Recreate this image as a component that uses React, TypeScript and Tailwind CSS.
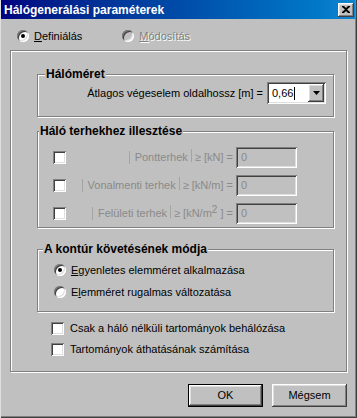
import type { ReactNode } from 'react';

const sunken =
  'shadow-[inset_1px_1px_0_#808080,inset_-1px_-1px_0_#ffffff,inset_2px_2px_0_#404040,inset_-2px_-2px_0_#dfdfdf]';
const raised =
  'shadow-[inset_-1px_-1px_0_#404040,inset_1px_1px_0_#ffffff,inset_-2px_-2px_0_#808080,inset_2px_2px_0_#dfdfdf]';
const etched = 'border border-[#808080] shadow-[inset_1px_1px_0_#ffffff,1px_1px_0_#ffffff]';

function Radio({ checked = false, disabled = false }: { checked?: boolean; disabled?: boolean }) {
  return (
    <span
      className={`relative inline-block w-[12px] h-[12px] shrink-0 rounded-full ${
        disabled ? 'bg-[#c0c0c0]' : 'bg-white'
      } ${sunken}`}
    >
      {checked && <span className="absolute left-[4px] top-[4px] w-[4px] h-[4px] rounded-full bg-black" />}
    </span>
  );
}

function Checkbox() {
  return <span className={`inline-block w-[13px] h-[13px] shrink-0 bg-white ${sunken}`} />;
}

function GroupBox({
  title,
  titleLeft,
  className,
  children,
}: {
  title: string;
  titleLeft: string;
  className: string;
  children: ReactNode;
}) {
  return (
    <div className={`relative ${etched} ${className}`}>
      <span
        className={`absolute -top-[8px] ${titleLeft} bg-[#c0c0c0] px-[1px] text-[12px] font-bold leading-[14px] text-black`}
      >
        {title}
      </span>
      {children}
    </div>
  );
}

function Sep() {
  return <span className="inline-block h-[13px] border-l border-[#a4a4a4]" />;
}

const loads = [
  { name: 'Pontterhek', unit: <>≥ [kN] =</> },
  { name: 'Vonalmenti terhek', unit: <>≥ [kN/m] =</> },
  {
    name: 'Felületi terhek',
    unit: (
      <>
        ≥ [kN/m<span className="relative -top-[4px] text-[10px]">2</span> ] =
      </>
    ),
  },
];

export default function App() {
  return (
    <div className="w-[357px] h-[418px] bg-[#c0c0c0] text-[11px] text-black [font-family:'Liberation_Sans',Arial,sans-serif] flex flex-col shadow-[inset_1px_0_0_#dfdfdf,inset_-1px_-1px_0_#404040,inset_-2px_-2px_0_#808080]">
      {/* Title bar */}
      <div className="ml-[1px] mr-[2px] h-[19px] flex items-center justify-between pl-[3px] pr-[1px] bg-gradient-to-r from-[#000080] to-[#1084d0]">
        <span className="text-white text-[12px] font-bold leading-none">Hálógenerálási paraméterek</span>
        <span className={`w-[16px] h-[14px] bg-[#c0c0c0] flex items-center justify-center ${raised}`}>
          <svg width="8" height="7" viewBox="0 0 8 7">
            <path d="M0 0h2l2 2 2-2h2v1L5 3.5 8 6v1H6L4 5 2 7H0V6l3-2.5L0 1z" fill="#000" />
          </svg>
        </span>
      </div>

      {/* Mode radios */}
      <div className="mt-[11px] h-[12px] flex items-center">
        <div className="ml-[17px] flex items-center gap-[5px]">
          <Radio checked />
          <span className="leading-none">
            <span className="underline">D</span>efiniálás
          </span>
        </div>
        <div className="ml-[40px] flex items-center gap-[5px]">
          <Radio disabled />
          <span className="leading-none text-[#808080] [text-shadow:1px_1px_0_#ffffff]">
            <span className="underline">M</span>ódosítás
          </span>
        </div>
      </div>

      {/* Main frame */}
      <div className={`mt-[8px] ml-[10px] w-[337px] h-[322px] flex flex-col ${etched}`}>
        <GroupBox title="Hálóméret" titleLeft="left-[7px]" className="mt-[23px] ml-[26px] w-[297px] h-[43px]">
          <div className="pt-[7px] pr-[7px] flex items-center justify-end">
            <span className="mr-[4px]">Átlagos végeselem oldalhossz [m] =</span>
            <div className={`w-[59px] h-[22px] bg-white flex items-center justify-between pl-[5px] pr-[2px] ${sunken}`}>
              <span className="flex items-center">
                0,66
                <span className="inline-block w-px h-[13px] bg-black ml-[1px]" />
              </span>
              <span className={`w-[16px] h-[18px] bg-[#c0c0c0] flex items-center justify-center ${raised}`}>
                <svg width="7" height="4" viewBox="0 0 7 4">
                  <path d="M0 0h7L3.5 4z" fill="#000" />
                </svg>
              </span>
            </div>
          </div>
        </GroupBox>

        <GroupBox
          title="Háló terhekhez illesztése"
          titleLeft="left-[1px]"
          className="mt-[14px] ml-[26px] w-[297px] h-[97px]"
        >
          <div className="pt-[15px] pl-[15px] pr-[36px] flex flex-col gap-[7px]">
            {loads.map((l) => (
              <div key={l.name} className="h-[21px] flex items-center">
                <Checkbox />
                <div className="flex-1 flex items-center justify-end text-[#8a8a8a]">
                  <Sep />
                  <span className="ml-[5px]">{l.name}</span>
                  <span className="ml-[3px]">
                    <Sep />
                  </span>
                  <span className="ml-[3px]">{l.unit}</span>
                </div>
                <div className={`ml-[3px] w-[61px] h-[21px] flex items-center pl-[5px] text-[#8a8a8a] ${sunken}`}>0</div>
              </div>
            ))}
          </div>
        </GroupBox>

        <GroupBox
          title="A kontúr követésének módja"
          titleLeft="left-[5px]"
          className="mt-[21px] ml-[26px] w-[297px] h-[63px]"
        >
          <div className="pt-[14px] pl-[16px] flex flex-col gap-[10px]">
            <div className="h-[12px] flex items-center gap-[5px]">
              <Radio checked />
              <span className="leading-none">
                <span className="underline">E</span>gyenletes elemméret alkalmazása
              </span>
            </div>
            <div className="h-[12px] flex items-center gap-[5px]">
              <Radio />
              <span className="leading-none">
                E<span className="underline">l</span>emméret rugalmas változatása
              </span>
            </div>
          </div>
        </GroupBox>

        <div className="mt-[10px] ml-[40px] flex flex-col gap-[8px]">
          <div className="h-[13px] flex items-center gap-[6px]">
            <Checkbox />
            <span className="leading-none">Csak a háló nélküli tartományok behálózása</span>
          </div>
          <div className="h-[13px] flex items-center gap-[6px]">
            <Checkbox />
            <span className="leading-none">Tartományok áthatásának számítása</span>
          </div>
        </div>
      </div>

      {/* Buttons */}
      <div className="mt-[12px] mr-[10px] flex justify-end gap-[9px]">
        <button className="w-[75px] h-[23px] border border-black bg-[#c0c0c0] p-0">
          <span className={`w-full h-full flex items-center justify-center ${raised}`}>OK</span>
        </button>
        <button className={`w-[75px] h-[23px] bg-[#c0c0c0] flex items-center justify-center ${raised}`}>Mégsem</button>
      </div>
    </div>
  );
}
